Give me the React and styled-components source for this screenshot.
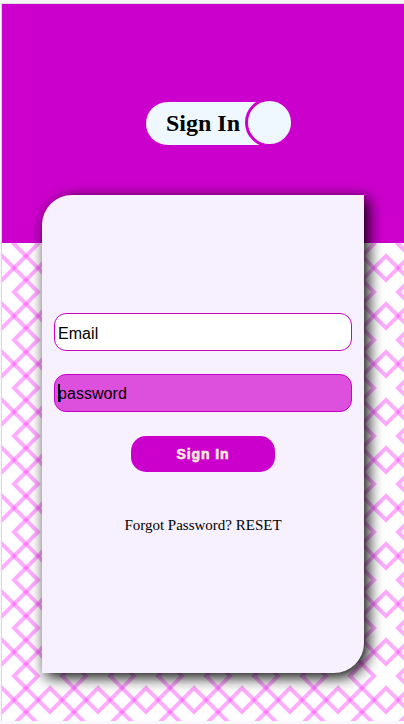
import React from "react";
import styled, { createGlobalStyle } from "styled-components";

const lattice = encodeURIComponent(
  `<svg xmlns="http://www.w3.org/2000/svg" width="48" height="48"><g fill="none" stroke="#ff30ff" stroke-width="4"><path stroke-opacity=".4" d="M0-36L36 0L0 36L-36 0Z"/><path stroke-opacity=".4" d="M48-36L84 0L48 36L12 0Z"/><path stroke-opacity=".4" d="M0 12L36 48L0 84L-36 48Z"/><path stroke-opacity=".4" d="M48 12L84 48L48 84L12 48Z"/></g></svg>`
);

const GlobalStyle = createGlobalStyle`
  *, *::before { box-sizing: border-box; }
  body { margin: 0; background: #f8f8fd; overflow: hidden; }
`;

const Frame = styled.div`
  width: 404px;
  height: 724px;
  padding: 3px 0 3px 1px;
  background: linear-gradient(#f5f5f5 4px, #f8f8fd 4px);
`;

const Page = styled.main`
  height: 718px;
  border-top: 1px solid #dcdcdc;
  border-left: 1px solid #d8d8d8;
  background: #fff url("data:image/svg+xml,${lattice}") 0 0 / 48px 48px padding-box;
  overflow: hidden;
`;

const Header = styled.header`
  height: 239px;
  padding: 98px 0 0 144px;
  background: #cc00cc;
`;

const Toggle = styled.div`
  position: relative;
  display: flex;
  align-items: center;
  width: 146px;
  height: 43px;
`;

const ToggleTrack = styled.div`
  width: 124px;
  height: 43px;
  padding-left: 20px;
  border-radius: 22px 0 0 22px;
  background: aliceblue;
  color: #000;
  font: bold 24px/43px "Liberation Serif", serif;
  white-space: nowrap;
`;

const ToggleKnob = styled.span`
  position: absolute;
  top: -4px;
  right: -2px;
  width: 49px;
  height: 49px;
  border: 3px solid #cc00cc;
  border-radius: 50%;
  background: aliceblue;
`;

const Card = styled.form`
  position: relative;
  display: flex;
  flex-direction: column;
  align-items: center;
  width: 322px;
  height: 478px;
  margin: -48px 0 0 40px;
  padding-top: 118.4px;
  border-radius: 30px 0 30px 0;
  background: #f7f0ff;
  box-shadow: 4px 4px 15px #000;
`;

const Field = styled.input`
  width: 298px;
  height: 38px;
  margin: 0 0 23px;
  padding: ${(p) => (p.$active ? "3px 3px 1px" : "4px 3px 1px")};
  border: 1px solid #cc00cc;
  border-radius: 12px;
  outline: 0;
  background: ${(p) => (p.$active ? "#dd4fdd" : "#fff")};
  color: #000;
  font: 16px "Liberation Sans", sans-serif;
  letter-spacing: 0.05px;
  &::placeholder { color: #000; opacity: 1; }
`;

const FieldWrap = styled.div`
  position: relative;
  height: 61px;
`;

const Caret = styled.span`
  position: absolute;
  left: 4px;
  top: 10px;
  width: 2px;
  height: 18px;
  background: #000;
`;

const Submit = styled.button`
  width: 144px;
  height: 36px;
  margin-top: 0.8px;
  padding: 0;
  border: 0;
  border-radius: 15px;
  background: #cc00cc;
  color: antiquewhite;
  font: 900 14px/36px "Liberation Sans", sans-serif;
  -webkit-text-stroke: 0.6px antiquewhite;
  letter-spacing: 0.9px;
`;

const Reset = styled.p`
  margin: 44px 0 0;
  color: #000;
  font: 15px/18px "Liberation Serif", serif;
  white-space: nowrap;
`;

export default function App() {
  return (
    <Frame>
      <GlobalStyle />
      <Page>
        <Header>
          <Toggle>
            <ToggleTrack>Sign In</ToggleTrack>
            <ToggleKnob />
          </Toggle>
        </Header>
        <Card>
          <FieldWrap>
            <Field type="text" placeholder="Email" />
          </FieldWrap>
          <FieldWrap>
            <Field type="password" placeholder="password" $active />
            <Caret />
          </FieldWrap>
          <Submit type="button">Sign In</Submit>
          <Reset>Forgot Password? RESET</Reset>
        </Card>
      </Page>
    </Frame>
  );
}
